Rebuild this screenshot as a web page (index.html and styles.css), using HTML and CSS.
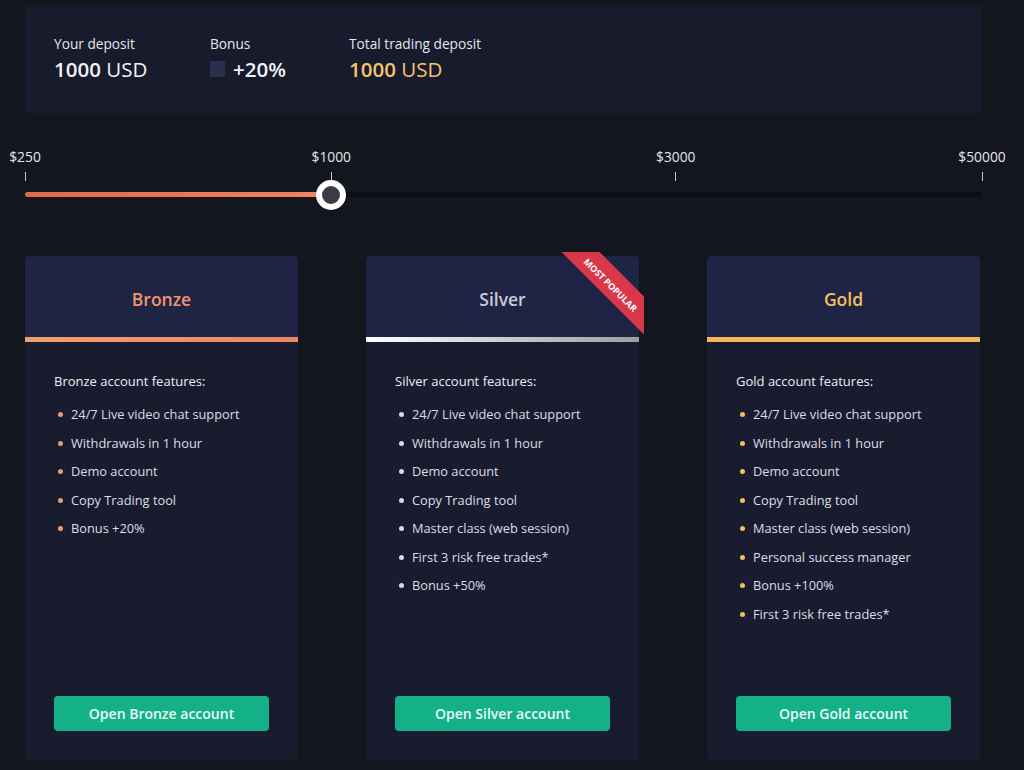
FILE: index.html
```html
<!DOCTYPE html>
<html lang="en">
<head>
<meta charset="utf-8">
<title>Accounts</title>
<link rel="stylesheet" href="styles.css">
</head>
<body>
<div class="page">
  <section class="summary">
    <div class="sum-col c1">
      <div class="sum-label">Your deposit</div>
      <div class="sum-value"><b>1000</b> USD</div>
    </div>
    <div class="sum-col c2">
      <div class="sum-label">Bonus</div>
      <div class="sum-value"><span class="bonus-box"></span><b>+20%</b></div>
    </div>
    <div class="sum-col">
      <div class="sum-label">Total trading deposit</div>
      <div class="sum-value gold"><b>1000</b> USD</div>
    </div>
  </section>

  <section class="slider">
    <div class="mark" style="left:0%"><span class="mark-label">$250</span><span class="tick"></span></div>
    <div class="mark" style="left:32%"><span class="mark-label">$1000</span><span class="tick"></span></div>
    <div class="mark" style="left:68%"><span class="mark-label">$3000</span><span class="tick"></span></div>
    <div class="mark" style="left:100%"><span class="mark-label">$50000</span><span class="tick"></span></div>
    <div class="track">
      <div class="fill" style="width:32%"></div>
      <div class="knob" style="left:32%"></div>
    </div>
  </section>

  <section class="cards">
    <article class="card bronze">
      <header class="card-head"><h2>Bronze</h2></header>
      <div class="card-bar"></div>
      <div class="card-body">
        <p class="feat-title">Bronze account features:</p>
        <ul class="feats">
          <li>24/7 Live video chat support</li>
          <li>Withdrawals in 1 hour</li>
          <li>Demo account</li>
          <li>Copy Trading tool</li>
          <li>Bonus +20%</li>
        </ul>
        <button class="btn">Open Bronze account</button>
      </div>
    </article>

    <article class="card silver">
      <header class="card-head"><h2>Silver</h2></header>
      <div class="ribbon-wrap"><div class="ribbon">MOST POPULAR</div></div>
      <div class="card-bar"></div>
      <div class="card-body">
        <p class="feat-title">Silver account features:</p>
        <ul class="feats">
          <li>24/7 Live video chat support</li>
          <li>Withdrawals in 1 hour</li>
          <li>Demo account</li>
          <li>Copy Trading tool</li>
          <li>Master class (web session)</li>
          <li>First 3 risk free trades*</li>
          <li>Bonus +50%</li>
        </ul>
        <button class="btn">Open Silver account</button>
      </div>
    </article>

    <article class="card gold-card">
      <header class="card-head"><h2>Gold</h2></header>
      <div class="card-bar"></div>
      <div class="card-body">
        <p class="feat-title">Gold account features:</p>
        <ul class="feats">
          <li>24/7 Live video chat support</li>
          <li>Withdrawals in 1 hour</li>
          <li>Demo account</li>
          <li>Copy Trading tool</li>
          <li>Master class (web session)</li>
          <li>Personal success manager</li>
          <li>Bonus +100%</li>
          <li>First 3 risk free trades*</li>
        </ul>
        <button class="btn">Open Gold account</button>
      </div>
    </article>
  </section>
</div>
</body>
</html>
```

FILE: styles.css
```css
* { box-sizing: border-box; }
html, body {
  margin: 0;
  padding: 0;
  background: #13151f;
  font-family: "Open Sans", "Noto Sans", sans-serif;
  color: #e4e6ee;
}
.page {
  width: 957px;
  margin-left: 25px;
  padding-top: 5px;
}

/* summary */
.summary {
  display: flex;
  height: 108px;
  background: #181b2c;
  padding: 29px 29px 0;
}
.sum-col.c1 { width: 156px; }
.sum-col.c2 { width: 139px; }
.sum-label {
  font-size: 13.7px;
  line-height: 19px;
  color: #e6e7ec;
}
.sum-value {
  margin-top: 2px;
  font-size: 20.5px;
  line-height: 28px;
  color: #f1f2f6;
  display: flex;
  align-items: center;
  white-space: pre;
}
.sum-value b { font-weight: 600; }
.sum-value.gold { color: #f2c470; }
.bonus-box {
  display: inline-block;
  width: 15px;
  height: 16px;
  background: #2a2f4d;
  margin-right: 8px;
}

/* slider */
.slider {
  position: relative;
  height: 143px;
}
.mark {
  position: absolute;
  top: 35px;
  width: 0;
  display: flex;
  flex-direction: column;
  align-items: center;
}
.mark-label {
  font-size: 13.8px;
  line-height: 18px;
  color: #e6e7ec;
  white-space: nowrap;
}
.tick {
  display: block;
  margin-top: 6px;
  width: 1px;
  height: 9px;
  background: #c8cad2;
}
.track {
  position: absolute;
  left: 0;
  right: 0;
  top: 79px;
  height: 5px;
  border-radius: 3px;
  background: #0c0e16;
}
.fill {
  height: 100%;
  border-radius: 3px;
  background: linear-gradient(90deg, #e4684c, #ef8466);
}
.knob {
  position: absolute;
  top: 50%;
  width: 30px;
  height: 30px;
  margin: -15px 0 0 -15px;
  border-radius: 50%;
  background: #3a3b44;
  border: 6px solid #ffffff;
}

/* cards */
.cards {
  display: grid;
  grid-template-columns: repeat(3, 273px);
  column-gap: 68px;
}
.card {
  position: relative;
  height: 504px;
  background: #191c2e;
  border-radius: 4px;
  display: flex;
  flex-direction: column;
}
.card-head {
  height: 81px;
  background: #1f2444;
  border-radius: 4px 4px 0 0;
  display: flex;
  align-items: center;
  justify-content: center;
}
.card-head h2 {
  margin: 4px 0 0;
  font-size: 17.5px;
  font-weight: 600;
}
.card-bar { height: 5px; }
.bronze h2 { color: #f2956c; }
.bronze .card-bar { background: linear-gradient(90deg, #f0a070, #ec8468); }
.silver h2 { color: #c9ccd8; }
.silver .card-bar { background: linear-gradient(90deg, #ffffff, #c0c3c6 60%, #9aa09f); }
.gold-card h2 { color: #f3c05c; }
.gold-card .card-bar { background: #f2b955; }

.card-body {
  flex: 1;
  display: flex;
  flex-direction: column;
  padding: 29px 29px 29px;
}
.feat-title {
  margin: 0;
  font-size: 13px;
  line-height: 20px;
  color: #eceef3;
}
.feats {
  list-style: none;
  margin: 9px 0 0;
  padding: 0;
}
.feats li {
  position: relative;
  padding-left: 17px;
  font-size: 12.8px;
  line-height: 28.5px;
  color: #dcdee6;
}
.feats li::before {
  content: "";
  position: absolute;
  left: 4px;
  top: 12px;
  width: 5px;
  height: 5px;
  border-radius: 50%;
}
.bronze .feats li::before { background: #f29a6c; }
.silver .feats li::before { background: #d8dade; }
.gold-card .feats li::before { background: #f3c05c; }

.btn {
  margin-top: auto;
  width: 215px;
  height: 35px;
  border: 0;
  border-radius: 4px;
  background: #14b189;
  color: #eafaf5;
  font-family: inherit;
  font-size: 14px;
  font-weight: 600;
  cursor: pointer;
}

/* ribbon */
.ribbon-wrap {
  position: absolute;
  top: -4px;
  right: -5px;
  width: 84px;
  height: 82px;
  overflow: hidden;
}
.ribbon {
  position: absolute;
  left: -13px;
  top: 18px;
  width: 130px;
  height: 27px;
  transform: rotate(45deg);
  background: #d8384a;
  color: #ffffff;
  font-size: 9px;
  font-weight: 700;
  line-height: 16px;
  padding-top: 8px;
  text-align: center;
}
```
